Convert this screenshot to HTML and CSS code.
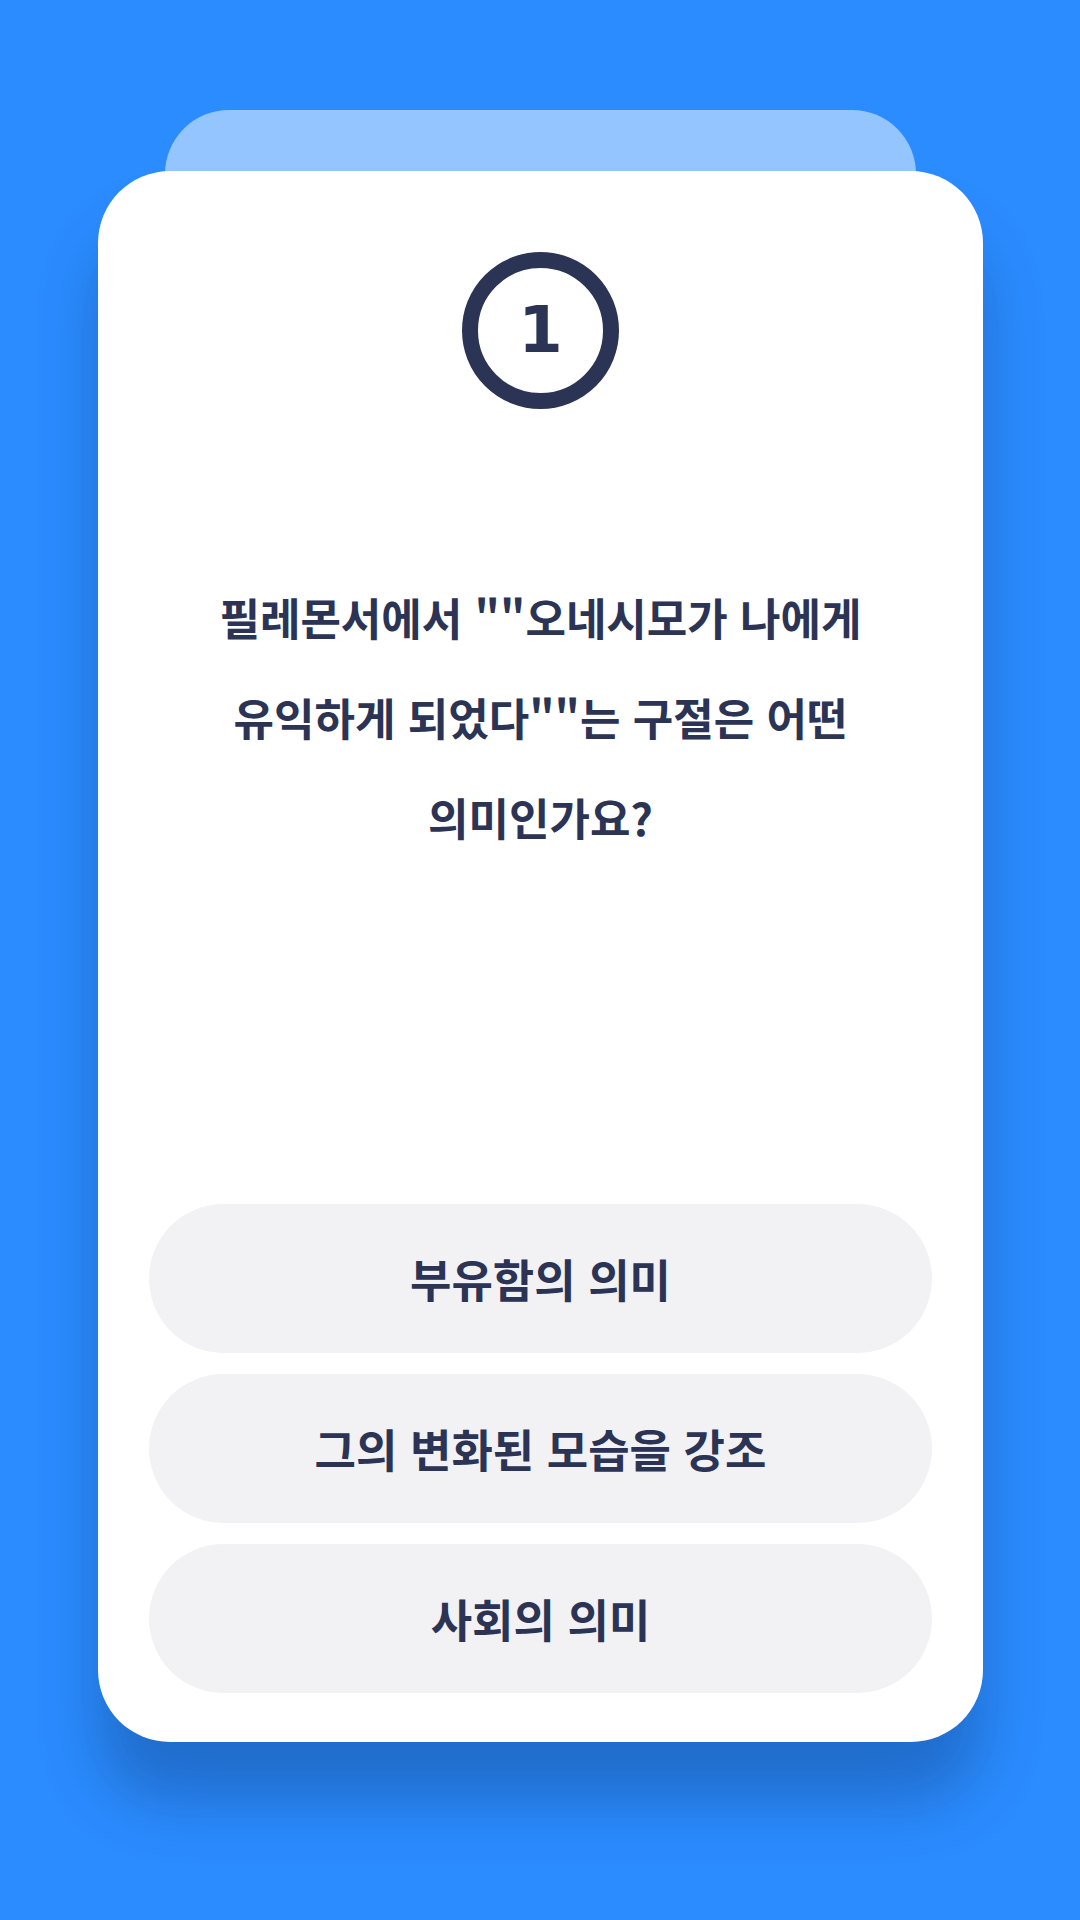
FILE: index.html
```html
<!DOCTYPE html>
<html lang="ko">
<head>
    <meta charset="UTF-8">
    <meta name="viewport" content="width=device-width, initial-scale=1.0">
    <title>퀴즈</title>
    <link rel="stylesheet" href="styles.css">
</head>
<body>

    <div class="stage">
        <div class="card-back"></div>
        <div class="card">
            <div class="number">1</div>
            <p class="question">필레몬서에서 ""오네시모가 나에게 유익하게 되었다""는 구절은 어떤 의미인가요?</p>
            <div class="answers">
                <button class="answer">부유함의 의미</button>
                <button class="answer">그의 변화된 모습을 강조</button>
                <button class="answer">사회의 의미</button>
            </div>
        </div>
    </div>

</body>
</html>
```

FILE: styles.css
```css
html, body {
    height: 100%;
}
body {
    margin: 0;
    background-color: #2b8cff;
    font-family: "Noto Sans CJK KR", "Noto Sans", sans-serif;
    color: #2b3454;
}
.stage {
    padding: 110px 97px 0 98px;
    display: flex;
    flex-direction: column;
    align-items: center;
}
.card-back {
    width: 751px;
    height: 120px;
    margin-bottom: -59px;
    background-color: #94c5ff;
    border-radius: 64px 64px 0 0;
}
.card {
    position: relative;
    width: 885px;
    height: 1571px;
    box-sizing: border-box;
    padding: 81px 51px 49px;
    background-color: #fff;
    border-radius: 72px;
    box-shadow: 0 60px 60px rgba(10, 40, 90, 0.3);
    display: flex;
    flex-direction: column;
    align-items: center;
}
.number {
    width: 157px;
    height: 157px;
    box-sizing: border-box;
    border: 16px solid #2b3454;
    border-radius: 50%;
    display: flex;
    align-items: center;
    justify-content: center;
    font-family: "DejaVu Sans", sans-serif;
    font-weight: bold;
    font-size: 64px;
    line-height: 1;
    padding-bottom: 2px;
}
.question {
    margin: 158px 0 0;
    padding: 0 40px;
    text-align: center;
    font-size: 44px;
    font-weight: 700;
    line-height: 100px;
    word-break: keep-all;
}
.answers {
    margin-top: auto;
    width: 100%;
    display: flex;
    flex-direction: column;
    gap: 21px;
}
.answer {
    height: 149px;
    border: none;
    border-radius: 75px;
    background-color: #f2f2f5;
    color: #2b3454;
    font-family: inherit;
    font-size: 45px;
    font-weight: 700;
    cursor: pointer;
}
```
